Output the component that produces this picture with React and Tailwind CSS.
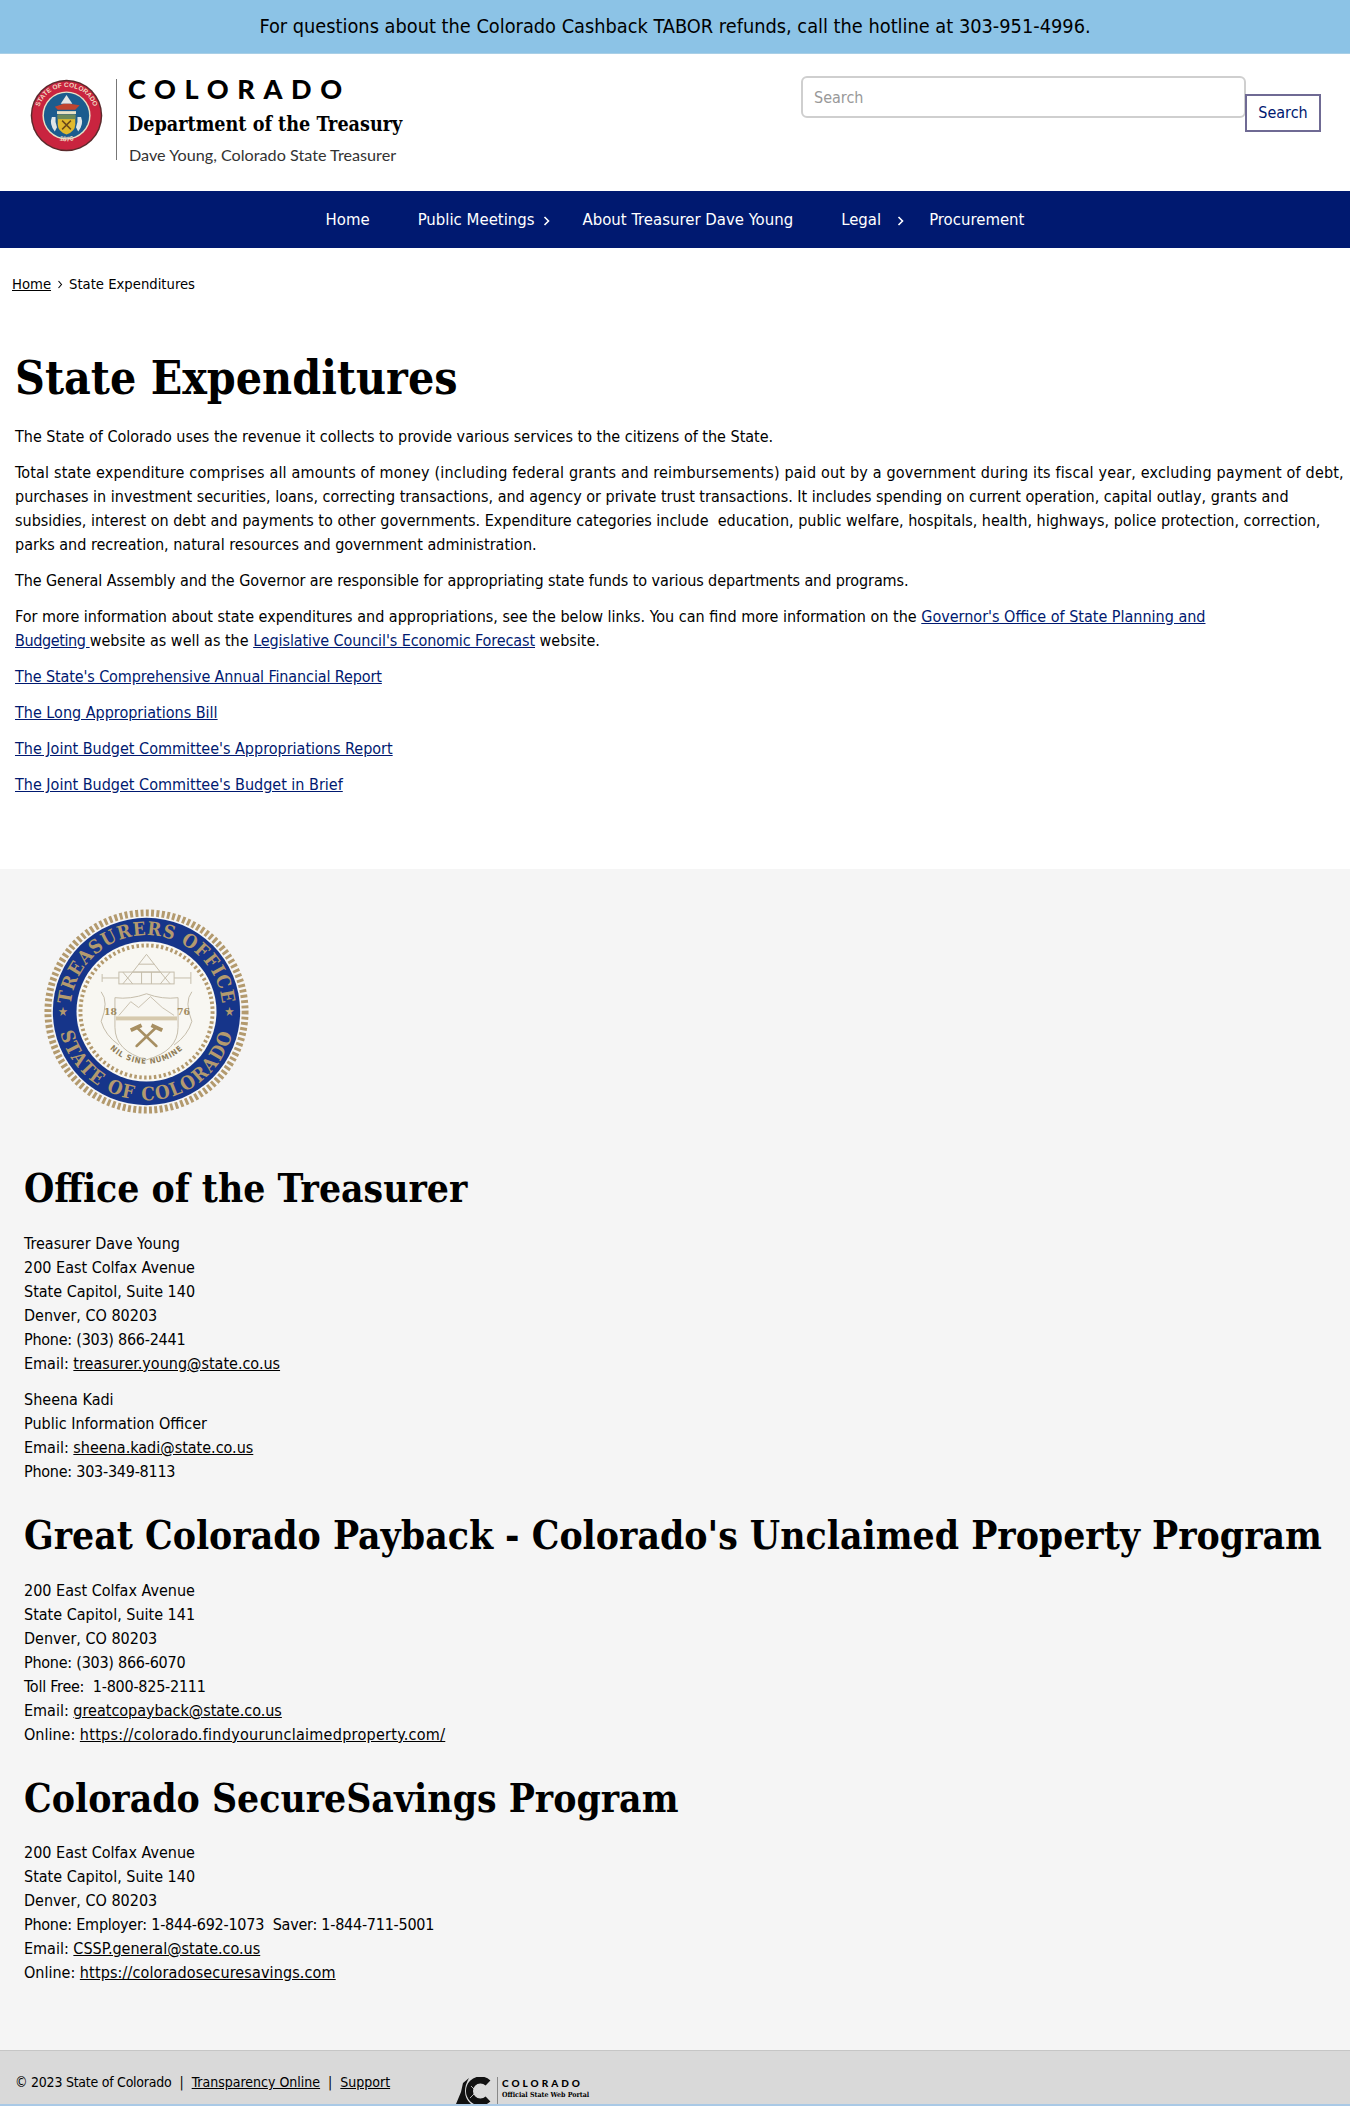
const ruleLinks = [
  { label: "The State's Comprehensive Annual Financial Report", className: "tracking-[-0.11px]" },
  { label: "The Long Appropriations Bill", className: "" },
  { label: "The Joint Budget Committee's Appropriations Report", className: "" },
  { label: "The Joint Budget Committee's Budget in Brief", className: "" },
];

const Chevron = ({ className }) => (
  <svg width="7" height="10" viewBox="0 0 7 10" fill="none" stroke="currentColor" strokeWidth="1.6" className={`absolute top-[25px] ${className}`}>
    <path d="M1.5 1 L5.5 5 L1.5 9" />
  </svg>
);

const StateSeal = () => (
  <svg width="73" height="73" viewBox="0 0 100 100">
    <circle cx="50" cy="50" r="49" fill="#5b2a2c" />
    <circle cx="50" cy="50" r="47" fill="#c9243f" />
    <circle cx="50" cy="50" r="33" fill="#e8e2c8" />
    <circle cx="50" cy="50" r="31" fill="#1c5c8e" />
    <defs>
      <path id="smallTop" d="M 11 50 A 39 39 0 0 1 89 50" />
      <path id="smallBottom" d="M 22 72 A 36 36 0 0 0 78 72" />
    </defs>
    <text fontSize="9" fontWeight="700" fill="#f0d8c0" fontFamily="Liberation Sans">
      <textPath href="#smallTop" startOffset="50%" textAnchor="middle">STATE OF COLORADO</textPath>
    </text>
    <text fontSize="9" fontWeight="700" fill="#f0d8c0" fontFamily="Liberation Sans">
      <textPath href="#smallBottom" startOffset="50%" textAnchor="middle">1876</textPath>
    </text>
    <path d="M50 22 L58 34 L42 34 Z" fill="#e4e6e6" />
    <path d="M34 38 L46 34 L54 34 L68 36 L62 42 L38 42 Z" fill="#c0442f" />
    <path d="M37 44 H63 V48 H37 Z" fill="#e8e2c8" />
    <path d="M38 49 H62 V62 Q62 72 50 76 Q38 72 38 62 Z" fill="#e0b92c" />
    <path d="M38 49 H62 V55 H38 Z" fill="#6d8a5a" />
    <path d="M44 57 L56 69 M56 57 L44 69" stroke="#6a4a1a" strokeWidth="2" />
    <path d="M30 52 Q26 62 34 72 L37 66 Q34 60 35 52 Z M70 52 Q74 62 66 72 L63 66 Q66 60 65 52 Z" fill="#dfe6e8" />
  </svg>
);

const TreasurerSeal = () => {
  const tan = "#b39a6e";
  return (
    <svg width="209" height="209" viewBox="0 0 212 212">
      <circle cx="106" cy="106" r="100" fill="none" stroke={tan} strokeWidth="7" strokeDasharray="3 2.4" />
      <circle cx="106" cy="106" r="95" fill="#16358a" />
      <circle cx="106" cy="106" r="71" fill="#f8f7f2" />
      <circle cx="106" cy="106" r="67" fill="none" stroke={tan} strokeWidth="4" strokeDasharray="2.5 2.5" />
      <defs>
        <path id="sealTop" d="M 30 118 A 77 77 0 1 1 182 118" />
        <path id="sealBottom" d="M 16 106 A 90 90 0 0 0 196 106" />
        <path id="sealMotto" d="M 61 134 A 53 53 0 0 0 151 134" />
      </defs>
      <text fontFamily="DejaVu Serif Condensed" fontWeight="700" fontSize="19" fill={tan} letterSpacing="0.8">
        <textPath href="#sealTop" startOffset="50%" textAnchor="middle">TREASURERS OFFICE</textPath>
      </text>
      <text fontFamily="DejaVu Serif Condensed" fontWeight="700" fontSize="19" fill={tan} letterSpacing="1.5">
        <textPath href="#sealBottom" startOffset="50%" textAnchor="middle">STATE OF COLORADO</textPath>
      </text>
      <text x="16" y="111" fontSize="13" fill={tan}>★</text>
      <text x="185" y="111" fontSize="13" fill={tan}>★</text>
      <text fontFamily="DejaVu Sans Condensed" fontWeight="700" fontSize="8" fill="#8f7d58" letterSpacing="0.8">
        <textPath href="#sealMotto" startOffset="50%" textAnchor="middle">NIL SINE NUMINE</textPath>
      </text>
      <g fill="none" stroke="#c4bcaa" strokeWidth="1">
        <path d="M92 66 L106 48 L120 66 Z" />
        <path d="M98 58 H114" />
        <rect x="78" y="66" width="56" height="12" />
        <path d="M82 66 L92 78 M92 66 L82 78 M120 66 L130 78 M130 66 L120 78 M101 66 V78 M111 66 V78" />
        <path d="M61 72 H78 M134 72 H151 M61 68 V76 M151 66 V78" />
        <path d="M74 92 Q90 94 106 88 Q122 94 138 92 V122 Q138 146 106 155 Q74 146 74 122 Z" />
        <path d="M60 86 Q68 96 60 116 Q64 130 78 140 M152 86 Q144 96 152 116 Q148 130 134 140" />
      </g>
      <path d="M78 110 L90 96 L98 102 L110 91 L122 102 L134 110" fill="none" stroke="#c9c1b0" strokeWidth="1" />
      <rect x="75" y="111" width="62" height="4" fill="#d6c9ad" />
      <g stroke="#a78f62" strokeWidth="2.6" strokeLinecap="round" fill="none">
        <path d="M96 141 L116 122 M116 141 L96 122" />
      </g>
      <path d="M90 125 L101 120 M111 120 L122 125" stroke="#a78f62" strokeWidth="4" />
      <text x="63" y="110" fontFamily="DejaVu Serif" fontWeight="700" fontSize="9.5" fill="#a08a60">18</text>
      <text x="137" y="110" fontFamily="DejaVu Serif" fontWeight="700" fontSize="9.5" fill="#a08a60">76</text>
    </svg>
  );
};

const PortalLogo = () => (
  <svg width="36" height="28" viewBox="0 0 36 28">
    <path d="M0 27 L5 15 L7 6 L13 1 Q9 8 9 14 Q9 22 15 27 Z" fill="#111" />
    <path d="M32 6 A 11 11 0 1 0 32 22" fill="none" stroke="#111" strokeWidth="7" />
    <path d="M14 21 L26 9 M15 9 L27 21" stroke="#ddd" strokeWidth="0.8" />
  </svg>
);

const Address = ({ children }) => <p className="mb-3 leading-6">{children}</p>;

const FooterLink = ({ children, className = "" }) => <a className={`underline text-black ${className}`}>{children}</a>;

const Phone = ({ children }) => <span className="tracking-[-0.25px]">{children}</span>;

const H2 = ({ children, className }) => (
  <h2 className={`font-['DejaVu_Serif_Condensed'] font-bold text-[38.7px] leading-[48px] ${className}`}>{children}</h2>
);

export default function App() {
  return (
    <div className="font-['DejaVu_Sans_Condensed',sans-serif] text-base text-black bg-white">
      <div className="h-[54px] bg-[#8cc3e6] border-b border-[#a9cfe6] flex items-center justify-center pt-px text-[19.8px]">
        For questions about the Colorado Cashback TABOR refunds, call the hotline at 303-951-4996.
      </div>

      <header className="h-[137px] flex justify-between pr-[29px]">
        <div className="flex items-start pl-[30px] pt-[25px]">
          <StateSeal />
          <div className="w-px h-[81px] bg-[#777] ml-[13px] mr-[11px]" />
          <div className="flex flex-col -mt-px">
            <div className="font-['Lato'] font-black text-[27px] leading-[22px] tracking-[0.32em]">COLORADO</div>
            <div className="font-['DejaVu_Serif_Condensed'] font-bold text-[19.6px] leading-6 mt-[13px]">Department of the Treasury</div>
            <div className="font-['Lato'] text-[16.2px] leading-5 mt-[8px] pl-px text-[#333]">Dave Young, Colorado State Treasurer</div>
          </div>
        </div>
        <form className="flex items-start pt-[22px]">
          <input
            placeholder="Search"
            className="w-[445px] h-[42px] border-2 border-[#cfcfcf] rounded-md px-[11px] bg-white placeholder:text-[#999] outline-none"
          />
          <button type="button" className="mt-[18px] -ml-px w-[76px] h-[38px] border-2 border-[#6f6a94] text-[#001970]">
            Search
          </button>
        </form>
      </header>

      <nav className="h-[57px] bg-[#001970] flex justify-center text-white text-[16.6px]">
        <a className="px-6 leading-[58px]">Home</a>
        <a className="relative px-6 leading-[58px]">Public Meetings<Chevron className="right-[9px]" /></a>
        <a className="px-6 leading-[58px]">About Treasurer Dave Young</a>
        <a className="relative px-6 leading-[58px]">Legal<Chevron className="right-px" /></a>
        <a className="px-6 leading-[58px]">Procurement</a>
      </nav>

      <div className="pl-3 pt-[25px] text-[14.7px] leading-[22px] flex items-center">
        <a className="underline">Home</a>
        <svg width="6" height="9" viewBox="0 0 6 9" fill="none" stroke="currentColor" strokeWidth="1.1" className="mx-[6px]">
          <path d="M1.5 1 L4.5 4.5 L1.5 8" />
        </svg>
        <span>State Expenditures</span>
      </div>

      <main className="pl-[15px] pt-[53px] pb-[60px]">
        <h1 className="font-['DejaVu_Serif_Condensed'] font-bold text-[46px] leading-[60px] mb-[17px]">State Expenditures</h1>
        <p className="mb-3 leading-6">The State of Colorado uses the revenue it collects to provide various services to the citizens of the State.</p>
        <p className="mb-3 leading-6">
          <span className="tracking-[0.18px]">Total state expenditure comprises all amounts of money (including federal grants and reimbursements) paid out by a government during its fiscal year, excluding payment of debt,</span><br />
          purchases in investment securities, loans, correcting transactions, and agency or private trust transactions. It includes spending on current operation, capital outlay, grants and subsidies, interest on debt and payments to other governments. Expenditure categories include&nbsp; education, public welfare, hospitals, health, highways, police protection, correction, parks and recreation, natural resources and government administration.
        </p>
        <p className="mb-3 leading-6 tracking-[-0.08px]">The General Assembly and the Governor are responsible for appropriating state funds to various departments and programs.</p>
        <p className="mb-3 leading-6">
          For more information about state expenditures and appropriations, see the below links. You can find more information on the{" "}
          <a className="underline text-[#001970]">Governor's Office of State Planning and<br /><span className="tracking-[-0.4px]">Budgeting </span></a>
          website as well as the <a className="underline text-[#001970] tracking-[-0.1px]">Legislative Council's Economic Forecast</a> website.
        </p>
        {ruleLinks.map((link) => (
          <p key={link.label} className="mb-3 leading-6">
            <a className={`underline text-[#001970] ${link.className}`}>{link.label}</a>
          </p>
        ))}
      </main>

      <footer className="bg-[#f5f5f5] pl-6 pt-[38px] pb-[53px]">
        <div className="ml-[18px]">
          <TreasurerSeal />
        </div>
        <H2 className="mt-[49px] mb-[19px]">Office of the Treasurer</H2>
        <Address>
          Treasurer Dave Young<br />200 East Colfax Avenue<br />State Capitol, Suite 140<br />Denver, CO 80203<br /><Phone>Phone: (303) 866-2441</Phone><br />Email: <FooterLink>treasurer.young@state.co.us</FooterLink>
        </Address>
        <Address>
          Sheena Kadi<br />Public Information Officer<br />Email: <FooterLink>sheena.kadi@state.co.us</FooterLink><br /><Phone>Phone: 303-349-8113</Phone>
        </Address>
        <H2 className="mt-[28px] mb-[19px]">Great Colorado Payback - Colorado's Unclaimed Property Program</H2>
        <Address>
          200 East Colfax Avenue<br />State Capitol, Suite 141<br />Denver, CO 80203<br /><Phone>Phone: (303) 866-6070</Phone><br /><Phone>Toll Free:&nbsp; 1-800-825-2111</Phone><br />Email: <FooterLink>greatcopayback@state.co.us</FooterLink><br />Online: <FooterLink className="tracking-[0.28px]">https://colorado.findyourunclaimedproperty.com/</FooterLink>
        </Address>
        <H2 className="mt-[28px] mb-[18px]">Colorado SecureSavings Program</H2>
        <Address>
          200 East Colfax Avenue<br />State Capitol, Suite 140<br />Denver, CO 80203<br /><Phone>Phone: Employer: 1-844-692-1073&nbsp; Saver: 1-844-711-5001</Phone><br />Email: <FooterLink>CSSP.general@state.co.us</FooterLink><br />Online: <FooterLink className="tracking-[0.13px]">https://coloradosecuresavings.com</FooterLink>
        </Address>
      </footer>

      <div className="h-[56px] bg-[#d9d9d9] border-t border-[#c6c6c6] border-b-2 border-b-[#a9c9e6] pl-[15px] flex items-start text-[14px] overflow-hidden">
        <div className="pt-[21px] leading-5 w-[441px] flex-none">
          <span className="tracking-[-0.25px]">© 2023 State of Colorado</span> &nbsp;|&nbsp; <FooterLink>Transparency Online</FooterLink> &nbsp;|&nbsp; <FooterLink>Support</FooterLink>
        </div>
        <div className="flex items-start pt-[26px]">
          <PortalLogo />
          <div className="w-px h-[28px] bg-[#888] ml-[5px] mr-[4px]" />
          <div className="flex flex-col">
            <span className="font-['Lato'] font-black text-[10px] leading-[12px] tracking-[0.3em]">COLORADO</span>
            <span className="font-['DejaVu_Serif_Condensed'] font-bold text-[7px] leading-[12px]">Official State Web Portal</span>
          </div>
        </div>
      </div>
    </div>
  );
}
